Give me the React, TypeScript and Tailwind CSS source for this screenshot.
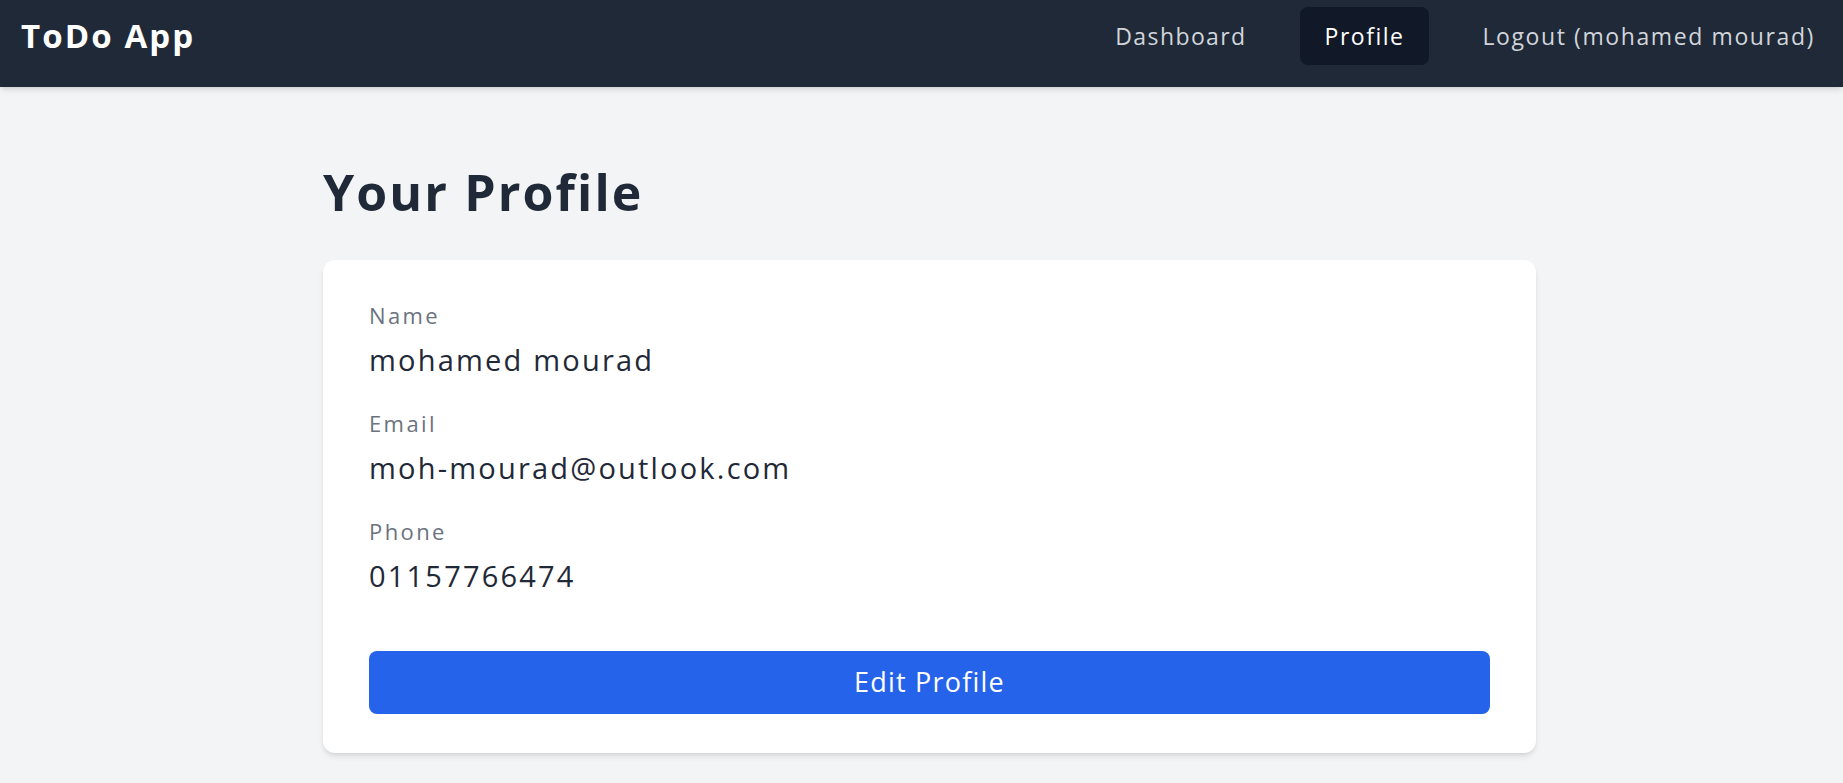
import React from "react";

const font = { fontFamily: '"Open Sans", "Noto Sans", sans-serif' };

const fields = [
  { label: "Name", value: "mohamed mourad" },
  { label: "Email", value: "moh-mourad@outlook.com" },
  { label: "Phone", value: "01157766474" },
];

const Navbar = () => {
  return (
    <nav className="h-[87px] bg-[#1f2937] shadow-md">
      <div className="h-[72px] flex items-center pl-[21px] pr-[3px]">
        <span className="text-[33px] leading-[72px] font-bold text-white tracking-[2.1px]">ToDo App</span>
        <div className="ml-auto flex items-center gap-[28px]">
          <a className="px-[25px] h-[58px] flex items-center rounded-[8px] text-[23px] tracking-[1.4px] text-[#d1d5db]">
            Dashboard
          </a>
          <a className="px-[25px] h-[58px] flex items-center rounded-[8px] bg-[#111827] text-[23px] tracking-[1.5px] text-white">
            Profile
          </a>
          <a className="px-[25px] h-[58px] flex items-center rounded-[8px] text-[23px] tracking-[1.6px] text-[#d1d5db]">
            Logout (mohamed mourad)
          </a>
        </div>
      </div>
    </nav>
  );
};

export default function App() {
  return (
    <div style={font} className="min-h-[783px] bg-[#f3f4f6]">
      <Navbar />
      <main className="mx-auto w-[1229px] pl-[16px] pt-[75px]">
        <h1 className="text-[50px] leading-[60px] font-bold text-[#1f2937] tracking-[2.1px] mb-[38px]">Your Profile</h1>
        <div className="bg-white rounded-[12px] shadow-md px-[46px] pt-[40px] pb-[39px]">
          <div className="flex flex-col gap-[28px]">
            {fields.map((f) => (
              <div key={f.label} className="flex flex-col gap-[10px]">
                <span className="text-[22px] leading-[30px] tracking-[2.4px] text-[#6b7280]">{f.label}</span>
                <span className="text-[29px] leading-[40px] tracking-[2.2px] text-[#1f2937]">{f.value}</span>
              </div>
            ))}
          </div>
          <button className="mt-[55px] w-full h-[63px] rounded-[8px] bg-[#2563eb] text-white text-[27px] tracking-[1.2px]">
            Edit Profile
          </button>
        </div>
      </main>
    </div>
  );
}
